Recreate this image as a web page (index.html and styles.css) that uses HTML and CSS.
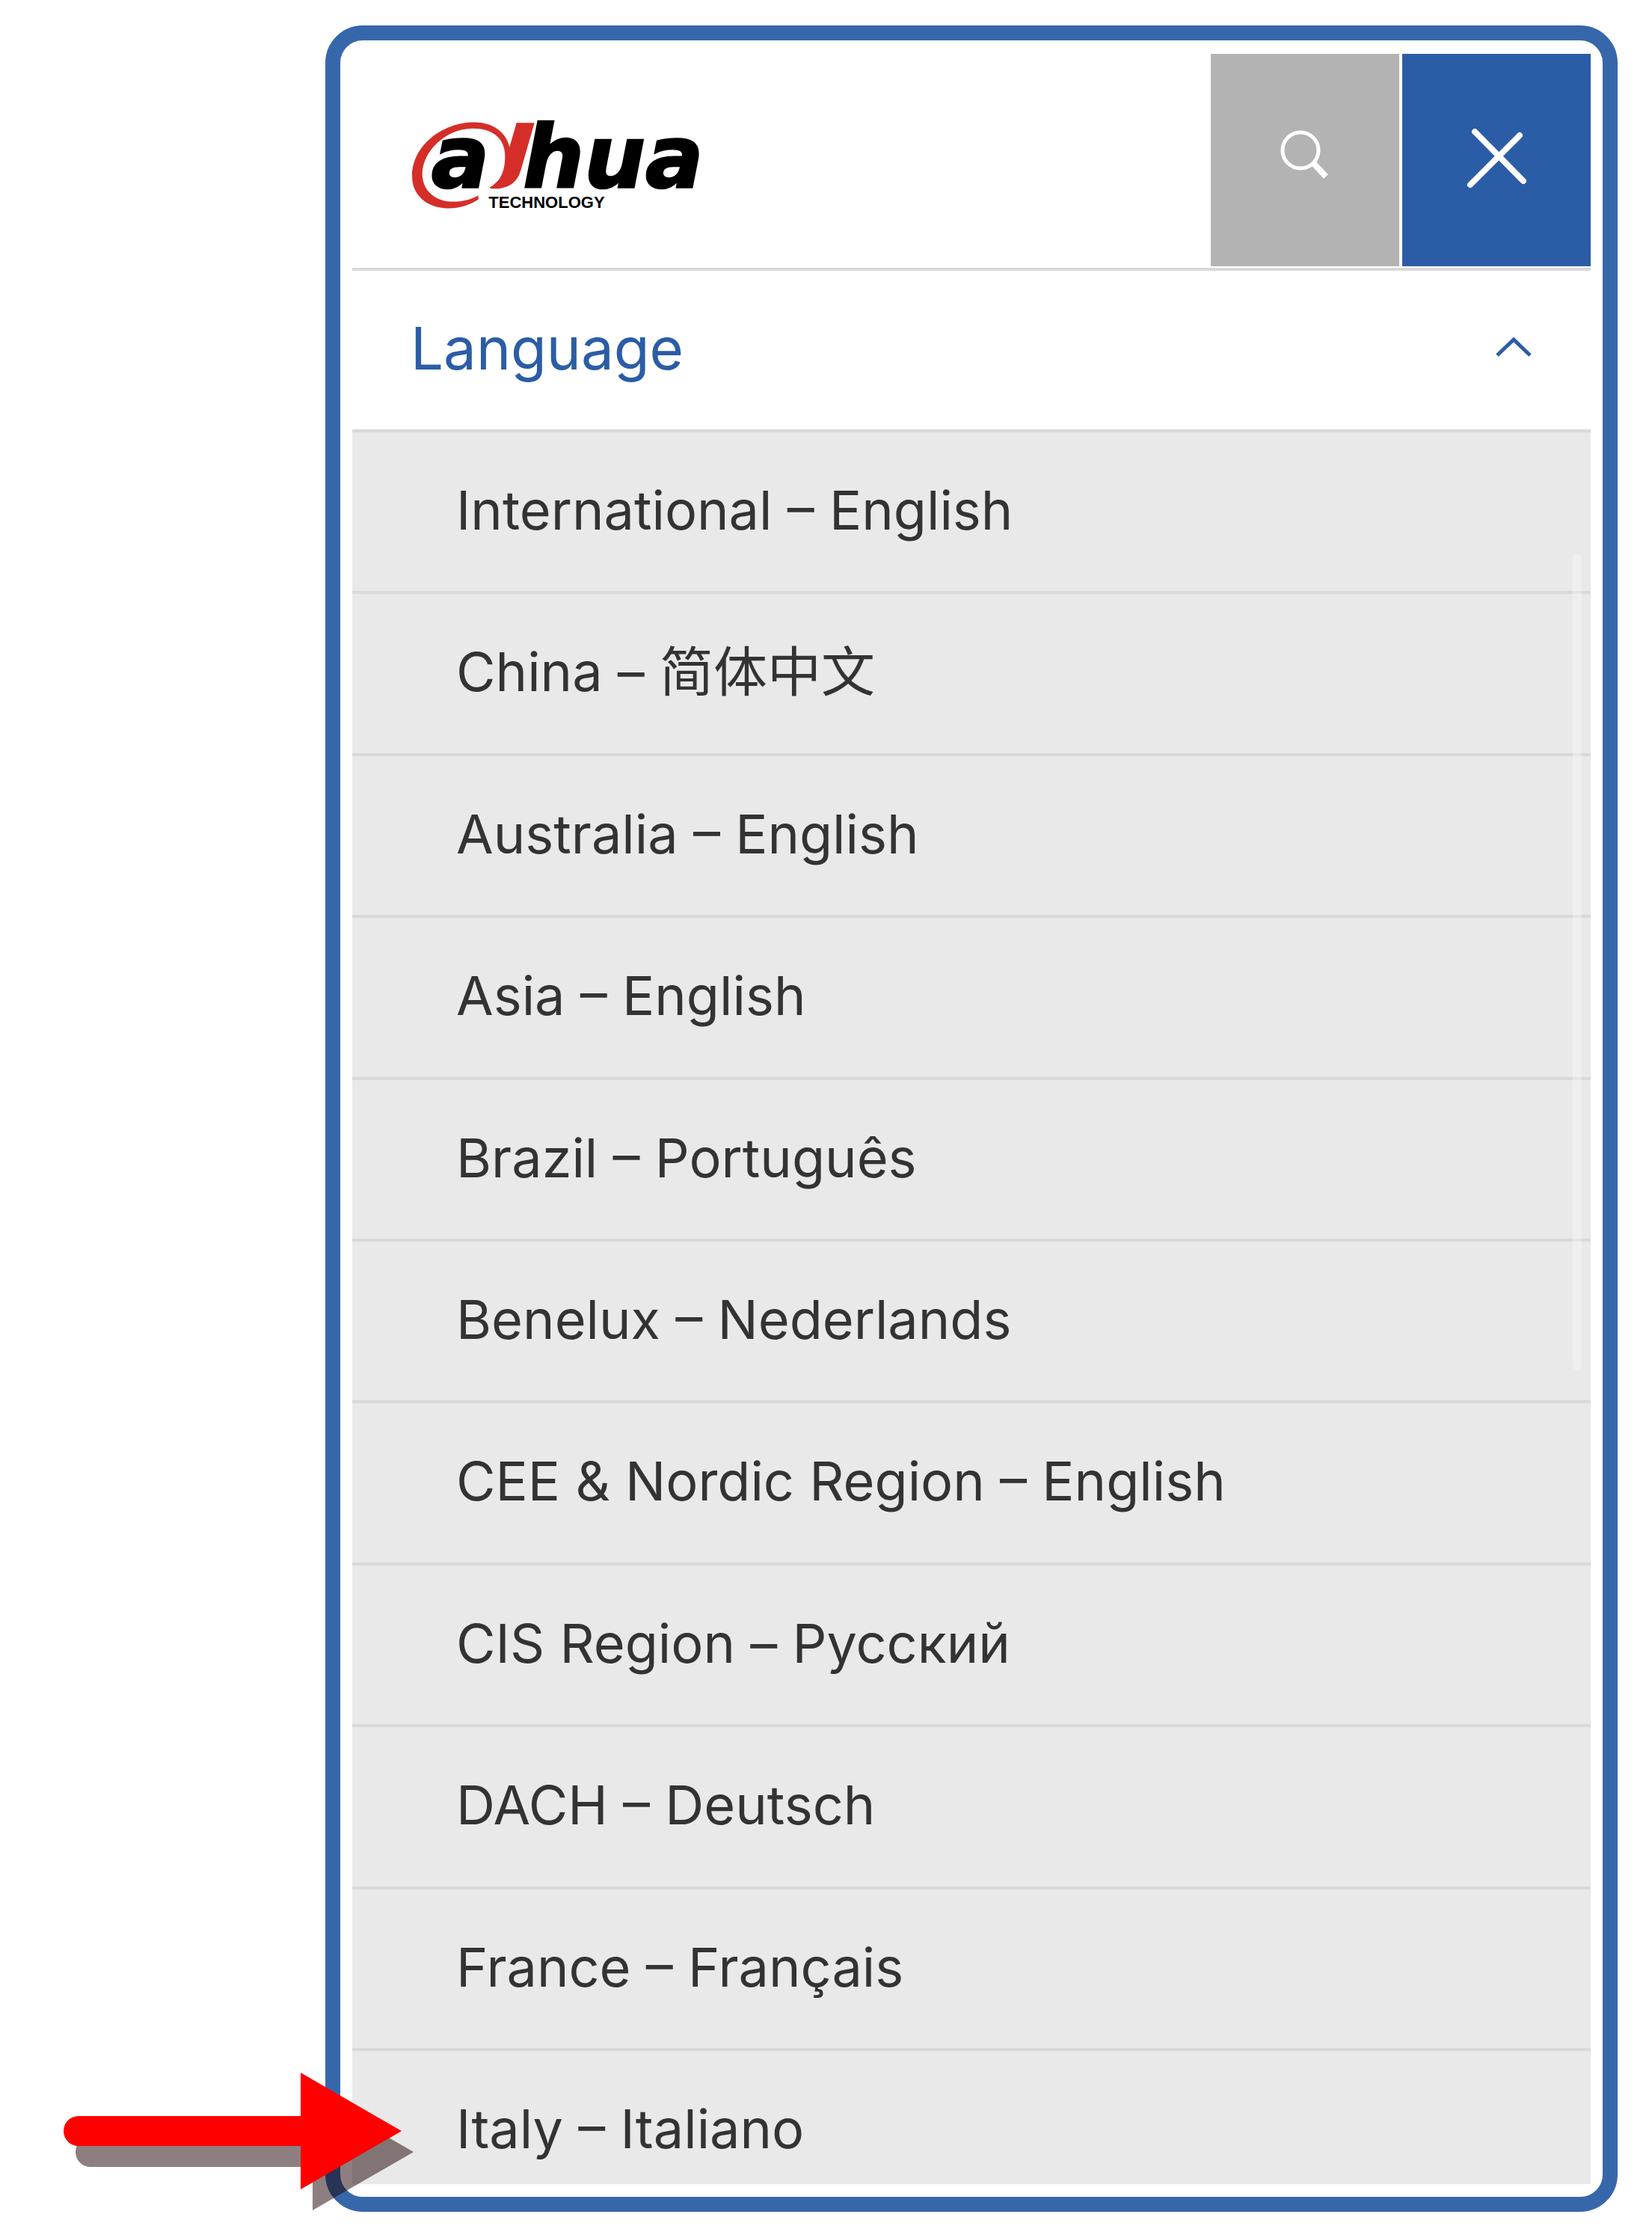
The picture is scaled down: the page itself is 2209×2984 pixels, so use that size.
FILE: index.html
```html
<!DOCTYPE html>
<html lang="en">
    <head>
        <meta charset="utf-8">
        <title>Dahua - Language</title>
        <link rel="stylesheet" href="styles.css">
    </head>
    <body>
        <div class="phone">
            <header class="header">
                <a class="logo" href="#">
                    <svg viewBox="93 72 1152 341" role="img" aria-label="Dahua Technology">
                        <path class="logo_red" d="M358 364 C320 384 285 390 245 388 C180 384 136 340 134 280 C133 190 225 96 335 95 C410 94 466 130 466 205 C466 265 450 305 405 331 Q403 336 412 336 L440 336 C490 330 518 305 530 260 L584 72 L512 72 L484 170 C470 105 410 70 345 70 C215 68 93 165 93 285 C93 365 155 415 240 415 C290 415 335 396 360 378 Z"/>
                        <text class="logo_text" x="170" y="331">a</text>
                        <text class="logo_text" x="538" y="331">hua</text>
                        <text class="logo_small" x="400" y="413">TECHNOLOGY</text>
                    </svg>
                </a>
                <div class="header_buttons">
                    <button class="btn search" type="button" aria-label="Search">
                        <svg viewBox="0 0 84 84">
                            <circle cx="36" cy="29" r="24" stroke-width="5"/>
                            <path d="M53 46L70 64" stroke-width="8"/>
                        </svg>
                    </button>
                    <button class="btn close" type="button" aria-label="Close">
                        <svg viewBox="0 0 84 84">
                            <path d="M13 4L78 70M73 9L7 75" stroke-width="8" stroke-linecap="round"/>
                        </svg>
                    </button>
                </div>
            </header>
            <button class="language" type="button" aria-expanded="true">
                <span>Language</span>
                <svg class="chevron" viewBox="0 0 50 26"><path d="M3 22L25 1L47 22"/></svg>
            </button>
            <ul class="list">
                <li><a href="#">International – English</a></li>
                <li><a href="#">China – <span lang="zh-CN">简体中文</span></a></li>
                <li><a href="#">Australia – English</a></li>
                <li><a href="#">Asia – English</a></li>
                <li><a href="#">Brazil – Português</a></li>
                <li><a href="#">Benelux – Nederlands</a></li>
                <li><a href="#">CEE &amp; Nordic Region – English</a></li>
                <li><a href="#">CIS Region – Русский</a></li>
                <li><a href="#">DACH – Deutsch</a></li>
                <li><a href="#">France – Français</a></li>
                <li><a href="#">Italy – Italiano</a></li>
            </ul>
            <div class="scrollbar"></div>
            <svg class="arrow" viewBox="0 0 470 186" aria-hidden="true">
                <path class="arrow_shadow" d="M36 86H333V28L468 106L333 184V126H36A20 20 0 0 1 36 86Z"/>
                <path class="arrow_red" d="M20 58H317V0L452 78L317 156V98H20A20 20 0 0 1 20 58Z"/>
            </svg>
        </div>
    </body>
</html>
```

FILE: styles.css
```css
* {
    box-sizing: border-box;
}
body {
    margin: 0;
    min-height: 100vh;
    padding: 34px 46px 27px 435px;
    display: flex;
    background: #fff;
    font-family: Inter, "Noto Sans CJK SC", sans-serif;
}
.phone {
    flex: 1;
    min-width: 0;
    position: relative;
    display: flex;
    flex-direction: column;
    padding: 18px 16px 17px;
    border: 20px solid #3767ab;
    border-radius: 50px;
}

/* top bar */
.header {
    display: flex;
    justify-content: space-between;
    align-items: flex-start;
    height: 290px;
    border-bottom: 4px solid #d9d9d9;
}
.logo {
    margin: 92px 0 0 80px;
}
.logo svg {
    display: block;
    width: 384px;
    height: 114px;
    overflow: visible;
}
.logo_red {
    fill: #d52e29;
}
.logo_text {
    font: italic bold 345px "DejaVu Sans", sans-serif;
    stroke: #000;
    stroke-width: 8px;
}
.logo_small {
    font: bold 66px "Liberation Sans", sans-serif;
}
.header_buttons {
    display: flex;
    gap: 4px;
}
.btn {
    width: 252px;
    height: 284px;
    display: flex;
    align-items: center;
    justify-content: center;
    border: 0;
    padding: 0;
    cursor: pointer;
}
.btn svg {
    width: 84px;
    height: 84px;
    fill: none;
    stroke: #fff;
}
.search {
    background: #b3b3b3;
}
.close {
    background: #2b5da6;
}

/* language menu */
.language {
    display: flex;
    justify-content: space-between;
    align-items: center;
    height: 216px;
    padding: 0 78px 4px;
    border: 0;
    border-bottom: 4px solid #d9d9d9;
    background: none;
    color: #2b5da6;
    font-family: inherit;
    font-size: 78px;
    line-height: 100px;
    cursor: pointer;
}
.chevron {
    width: 50px;
    height: 26px;
    overflow: visible;
    fill: none;
    stroke: #2b5da6;
    stroke-width: 5px;
}
.list {
    flex: 1;
    display: flex;
    flex-direction: column;
    margin: 0;
    padding: 0;
    list-style: none;
    background: #e9e9e9;
}
.list li {
    flex: 1;
    border-bottom: 4px solid #d9d9d9;
}
.list li:last-child {
    flex: none;
    height: 178px;
    border-bottom: 0;
}
.list a {
    display: block;
    padding: 54px 20px 54px 139px;
    color: #333;
    font-size: 72px;
    line-height: 100px;
    text-decoration: none;
}
.scrollbar {
    position: absolute;
    top: 686px;
    right: 28px;
    width: 12px;
    height: 1092px;
    border-radius: 6px;
    background: rgba(255, 255, 255, 0.3);
}

/* pointer to the last language, over the frame */
.arrow {
    position: absolute;
    left: -370px;
    bottom: -20px;
    width: 470px;
    height: 186px;
}
.arrow_red {
    fill: #f00;
}
.arrow_shadow {
    fill: rgba(28, 0, 0, 0.5);
}
```
